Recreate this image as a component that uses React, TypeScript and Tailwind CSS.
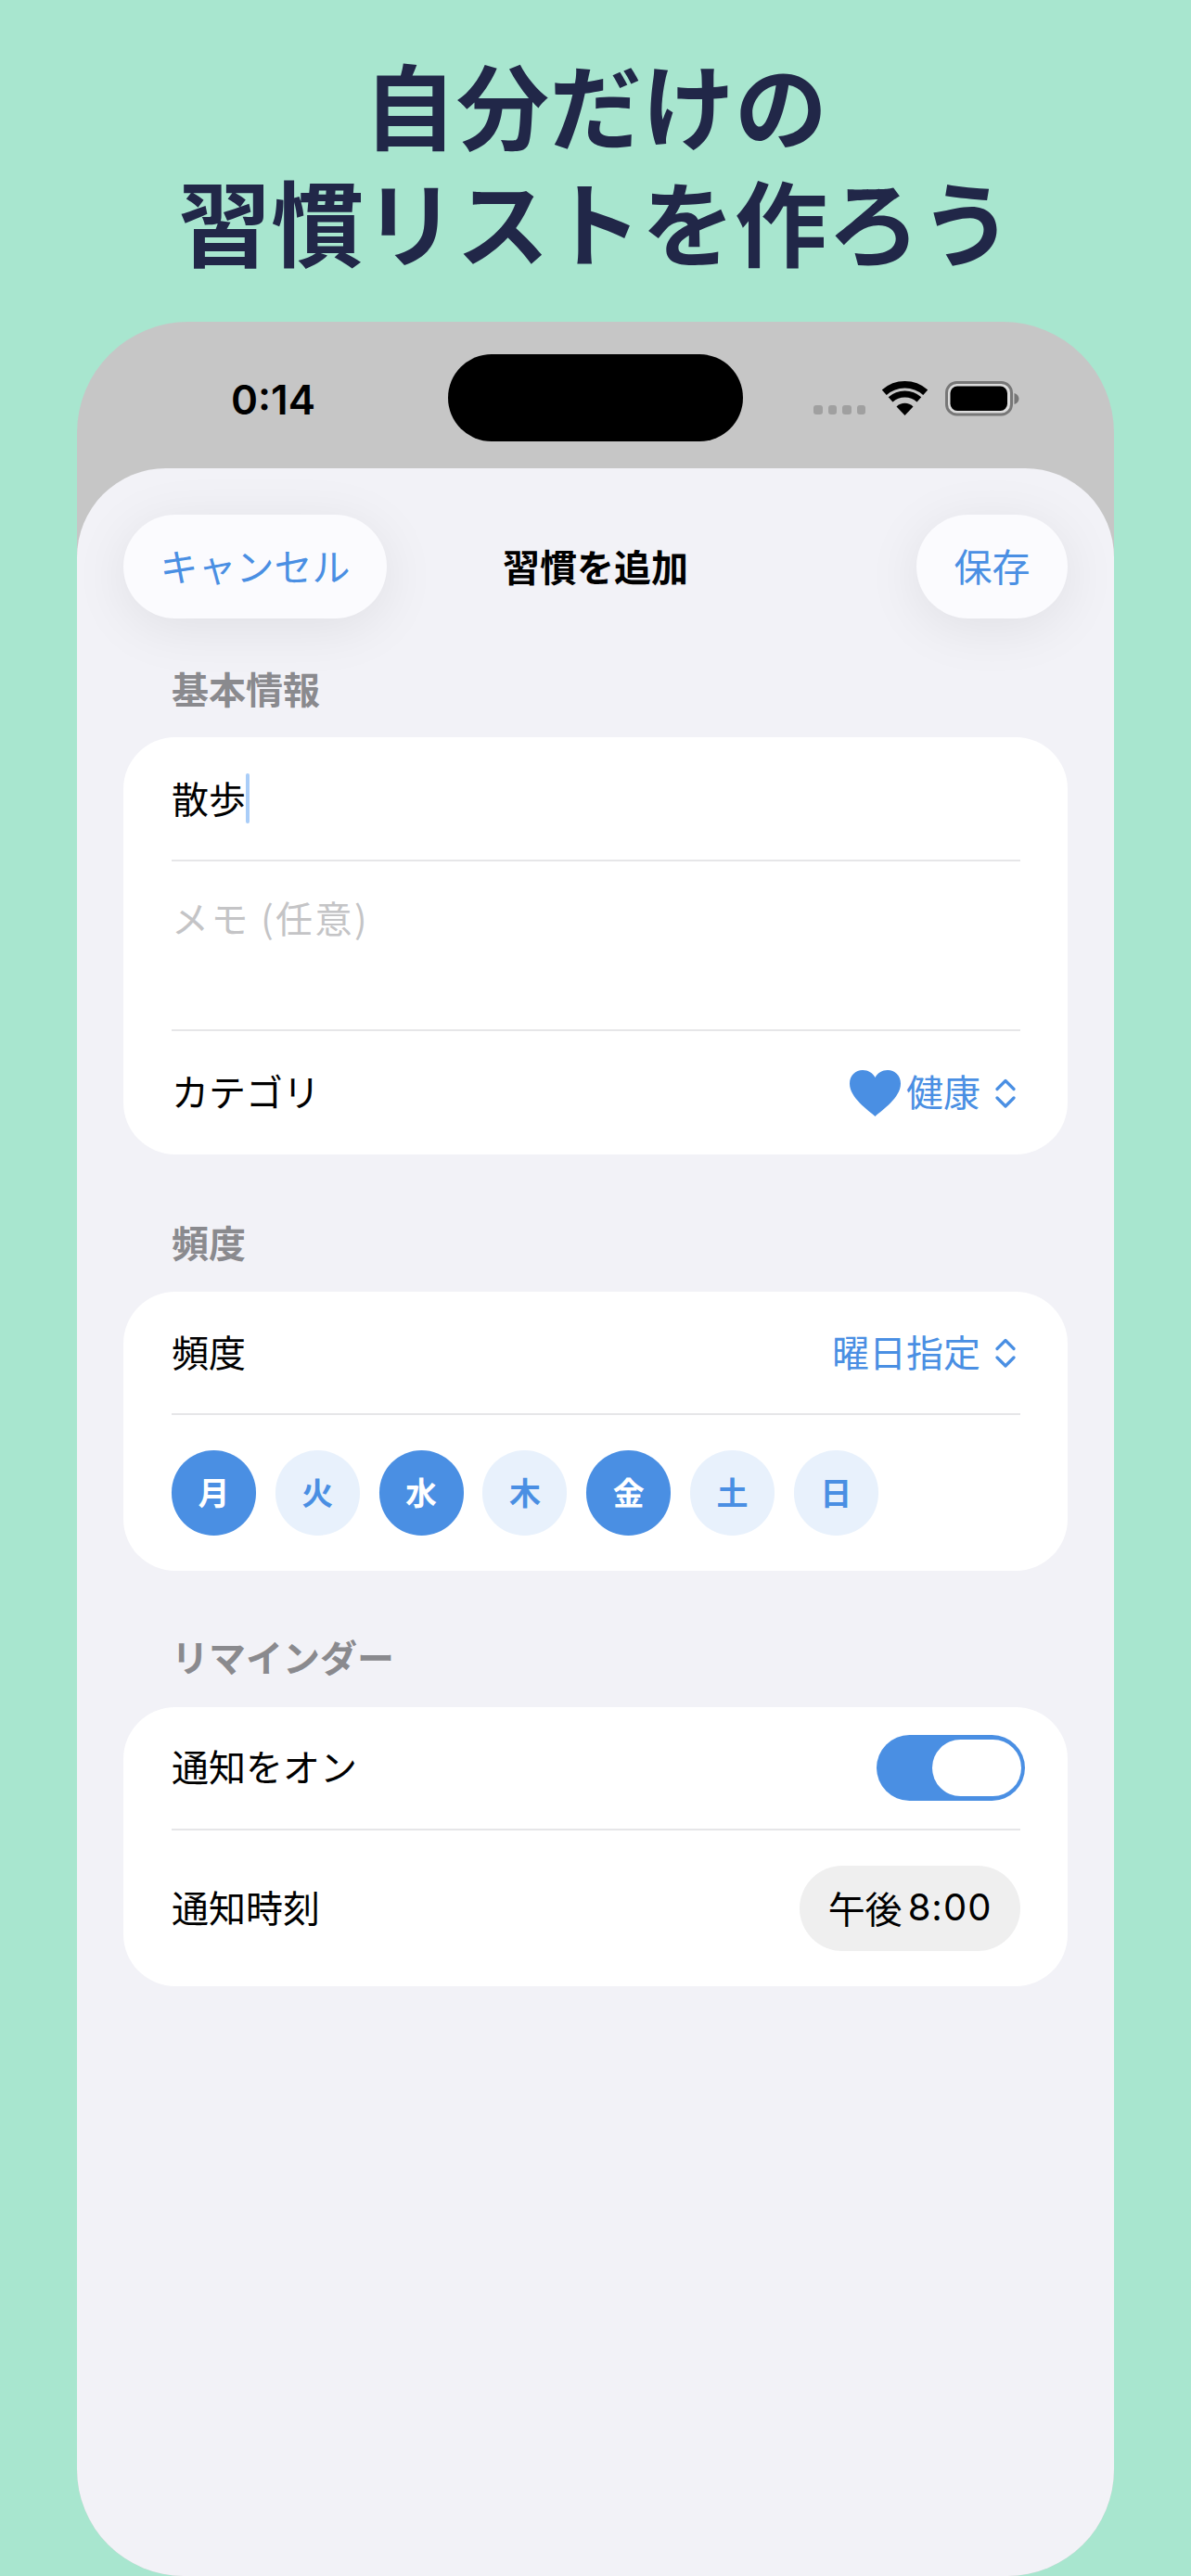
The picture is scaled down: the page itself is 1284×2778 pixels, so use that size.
import React from "react";

const Sep = () => <div className="h-[2px] bg-[#e6e6e8]" />;

const Chevrons = () => (
  <svg width="22" height="32" viewBox="0 0 22 32" fill="none" stroke="#4a8fe3" strokeWidth="3.2" strokeLinecap="round" strokeLinejoin="round">
    <path d="M2 11.5 L11 2.5 L20 11.5" />
    <path d="M2 21 L11 30 L20 21" />
  </svg>
);

const Heart = () => (
  <svg width="55" height="50" viewBox="0 0 55 50" fill="#4a8fe3">
    <path d="M27.5 50 C20 43 0 30 0 14.5 C0 5.5 6.5 0 14 0 C20 0 25 3 27.5 8 C30 3 35 0 41 0 C48.5 0 55 5.5 55 14.5 C55 30 35 43 27.5 50 Z" />
  </svg>
);

const Wifi = () => (
  <svg width="49" height="37" viewBox="0 0 49 37" fill="none">
    <path d="M2.25 12.3 A33.25 33.25 0 0 1 46.75 12.3" stroke="#000" strokeWidth="7.5" />
    <path d="M9.1 19.9 A23 23 0 0 1 39.9 19.9" stroke="#000" strokeWidth="7" />
    <path d="M24.5 37 L15.5 27.4 A13 13 0 0 1 33.5 27.4 Z" fill="#000" />
  </svg>
);

const Battery = () => (
  <svg width="80" height="38" viewBox="0 0 80 38" fill="none">
    <rect x="1.5" y="1.5" width="70" height="34.5" rx="11" fill="#dcdcdc" stroke="#777777" strokeWidth="3" />
    <rect x="5.5" y="5.5" width="61.5" height="26.5" rx="7.5" fill="#000" />
    <path d="M74.5 13 C78 14 79.5 16.5 79.5 19 C79.5 21.5 78 24 74.5 25 Z" fill="#777777" />
  </svg>
);

const days: { d: string; on: boolean }[] = [
  { d: "月", on: true },
  { d: "火", on: false },
  { d: "水", on: true },
  { d: "木", on: false },
  { d: "金", on: true },
  { d: "土", on: false },
  { d: "日", on: false },
];

const Label = ({ children, cls }: { children: React.ReactNode; cls: string }) => (
  <div className={`pl-[52px] text-[40px] leading-[48px] font-semibold text-[#8a8a8e] ${cls}`}>{children}</div>
);

export default function App() {
  return (
    <div className="w-[1284px] h-[2778px] bg-[#a8e6cf] flex flex-col overflow-hidden font-['Noto_Sans_CJK_JP',sans-serif]">
      <h1 className="pt-[48px] text-center text-[100px] leading-[126px] font-bold text-[#212748]">
        自分だけの
        <br />
        習慣リストを作ろう
      </h1>

      <div className="mt-[47px] mx-[83px] flex-1 flex flex-col bg-[#c6c6c6] rounded-t-[120px] rounded-b-[115px] overflow-hidden">
        <div className="h-[158px] shrink-0 grid grid-cols-[400px_318px_1fr]">
          <div className="pl-[166px] pt-[57px] h-[110px] flex items-center font-['Inter',sans-serif] font-semibold text-[44px] text-black">0:14</div>
          <div className="mt-[35px] h-[94px] bg-black rounded-full" />
          <div className="pl-[76px] pt-[63px] flex items-start">
            <div className="flex gap-[6px] mt-[27px]">
              <div className="w-[9.5px] h-[9.5px] rounded-[3px] bg-[#a0a0a0]" />
              <div className="w-[9.5px] h-[9.5px] rounded-[3px] bg-[#a0a0a0]" />
              <div className="w-[9.5px] h-[9.5px] rounded-[3px] bg-[#a0a0a0]" />
              <div className="w-[9.5px] h-[9.5px] rounded-[3px] bg-[#a0a0a0]" />
            </div>
            <div className="ml-[18px] mt-[1px]"><Wifi /></div>
            <div className="ml-[19px] mt-[1px]"><Battery /></div>
          </div>
        </div>

        <div className="flex-1 bg-[#f2f2f7] rounded-t-[96px] px-[50px] pt-[50px]">
          <div className="h-[112px] flex items-center">
            <div className="flex-1 flex justify-start">
              <button className="w-[284px] h-[112px] pb-[3px] rounded-full bg-[#fbfbfe] shadow-[0_10px_60px_rgba(0,0,0,0.08)] text-[41px] text-[#4a8fe3]">キャンセル</button>
            </div>
            <div className="pb-[3px] text-[40px] font-semibold text-black">習慣を追加</div>
            <div className="flex-1 flex justify-end">
              <button className="w-[163px] h-[112px] pb-[3px] rounded-full bg-[#fbfbfe] shadow-[0_10px_60px_rgba(0,0,0,0.08)] text-[41px] text-[#4a8fe3]">保存</button>
            </div>
          </div>

          <Label cls="mt-[51px] mb-[29px]">基本情報</Label>
          <div className="bg-white rounded-[56px] pl-[52px] pr-[51px]">
            <div className="h-[132px] flex items-center text-[40px] text-black">
              <span className="pb-[3px]">散歩</span>
              <span className="w-1 h-[54px] bg-[#a9cdf8] rounded-full" />
            </div>
            <Sep />
            <div className="h-[181px] pt-[29px] text-[40px] leading-[62px] tracking-[2.4px] text-[#c4c4c6]">メモ (任意)</div>
            <Sep />
            <div className="h-[133px] flex items-center justify-between text-[40px] text-black">
              <span className="pb-[5px]">カテゴリ</span>
              <div className="flex items-center text-[#4a8fe3] pr-[5px]">
                <Heart />
                <span className="ml-[6px] mr-[16px] pb-[5px]">健康</span>
                <Chevrons />
              </div>
            </div>
          </div>

          <Label cls="mt-[70px] mb-[30px]">頻度</Label>
          <div className="bg-white rounded-[56px] pl-[52px] pr-[51px]">
            <div className="h-[131px] flex items-center justify-between text-[40px] text-black">
              <span className="pb-[3px]">頻度</span>
              <div className="flex items-center text-[#4a8fe3] pr-[5px]">
                <span className="mr-[16px] pb-[3px]">曜日指定</span>
                <Chevrons />
              </div>
            </div>
            <Sep />
            <div className="pt-[38px] pb-[38px] flex gap-[20.8px]">
              {days.map(({ d, on }) => (
                <div
                  key={d}
                  className={
                    on
                      ? "w-[91px] h-[92px] pb-[3px] rounded-full flex items-center justify-center text-[34px] font-bold bg-[#4a8fe3] text-white"
                      : "w-[91px] h-[92px] pb-[3px] rounded-full flex items-center justify-center text-[34px] font-bold bg-[#e8f1fc] text-[#4a8fe3]"
                  }
                >
                  {d}
                </div>
              ))}
            </div>
          </div>

          <Label cls="mt-[68px] mb-[31px]">リマインダー</Label>
          <div className="bg-white rounded-[56px] pl-[52px] pr-[51px]">
            <div className="h-[131px] flex items-center justify-between text-[40px] text-black">
              <span className="pb-[5px]">通知をオン</span>
              <div className="w-[160px] h-[71px] -mr-[5px] rounded-full bg-[#4a8fe3] flex items-center justify-end pr-[4px]">
                <div className="w-[96px] h-[61px] rounded-full bg-white" />
              </div>
            </div>
            <Sep />
            <div className="pt-[38px] pb-[38px] flex items-center justify-between text-[40px] text-black">
              <span className="pb-[5px]">通知時刻</span>
              <div className="w-[238px] h-[92px] pb-[3px] rounded-full bg-[#efefef] flex items-center justify-center">
                <span>午後</span>
                <span className="ml-[6px] font-['Inter',sans-serif] tracking-[1px]">8:00</span>
              </div>
            </div>
          </div>
        </div>
      </div>
    </div>
  );
}
